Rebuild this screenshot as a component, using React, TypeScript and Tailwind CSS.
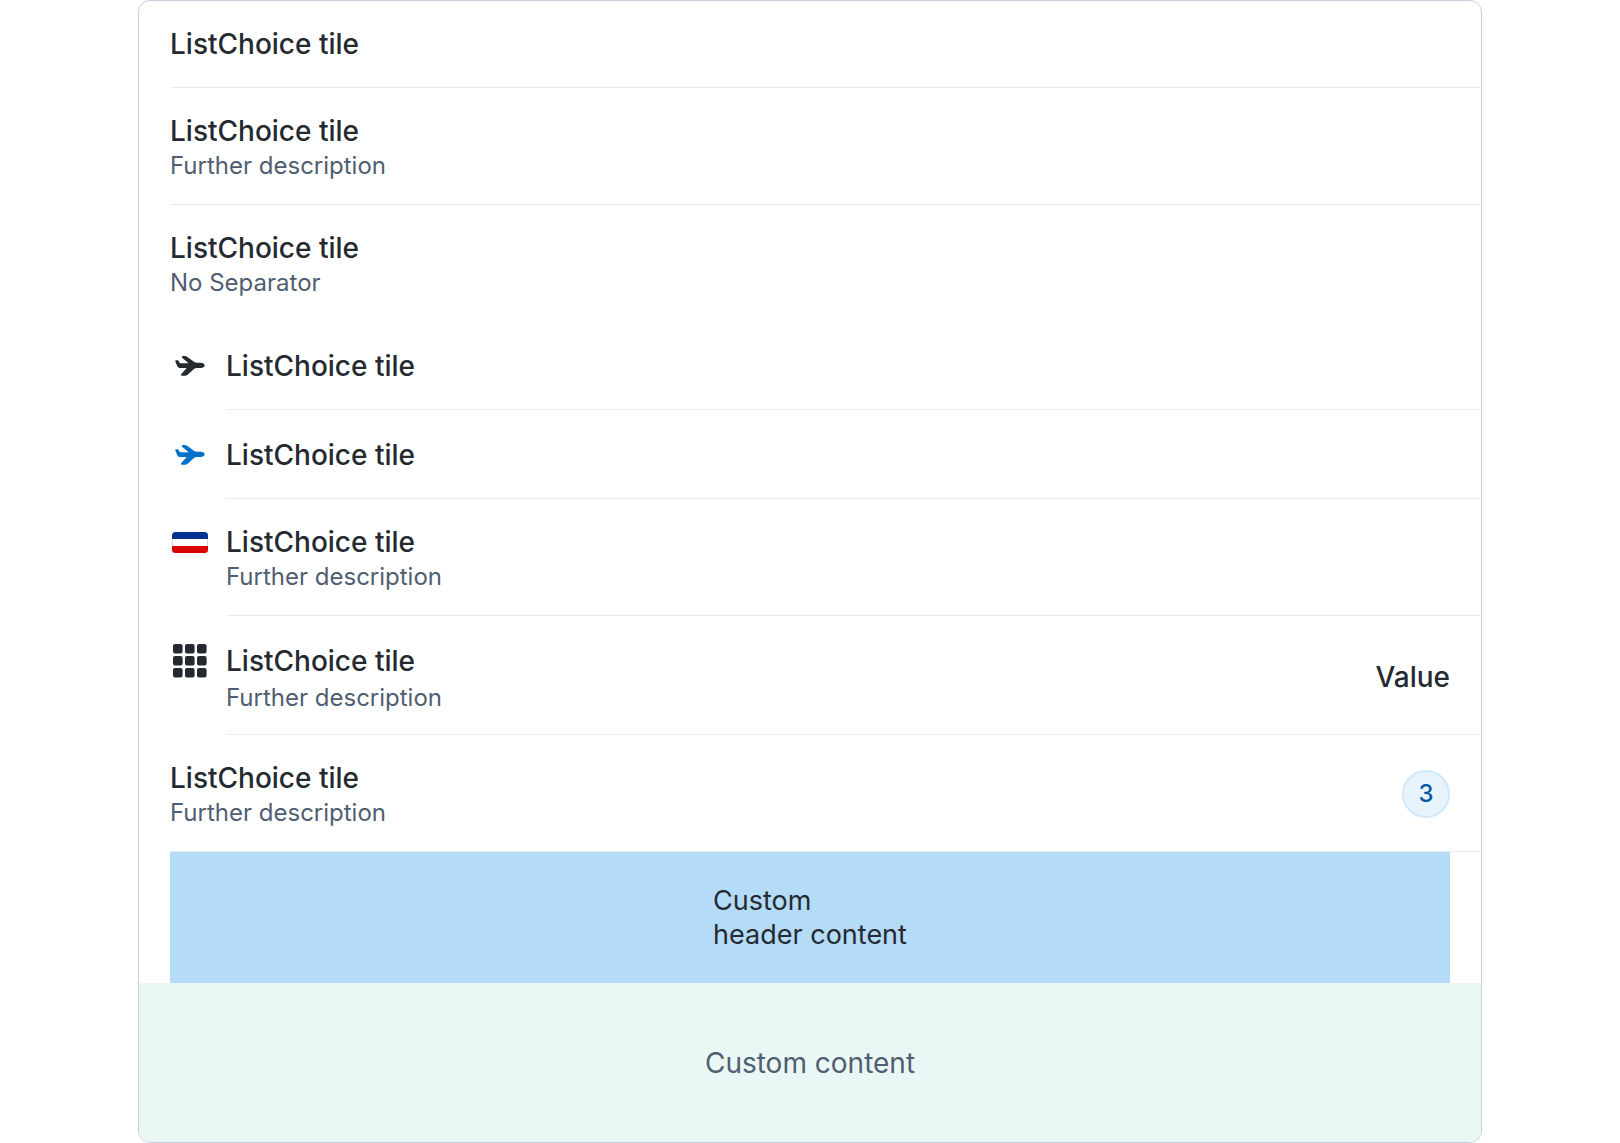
import type { ReactNode } from "react";

function Airplane() {
  return (
    <svg viewBox="0 0 90 60" className="h-5 w-[30px]" fill="currentColor" aria-hidden="true">
      <path d="M3 13H8Q10 13 11 15L14 20Q15 22 18 22H41L22 6Q18 1 23 0H30Q33 0 36 2L57 17Q61 20 66 20H79Q89 22 89 28Q89 34 79 36H66Q60 36 56 40L38 56Q34 59 30 59H20Q15 58 19 54L35 36H14Q9 36 7 31L1 17Q0 13 3 13Z" />
    </svg>
  );
}

function Flag() {
  return (
    <svg viewBox="0 0 36 21" className="h-[21px] w-9" aria-hidden="true">
      <clipPath id="flag-shape">
        <rect width="36" height="21" rx="3.5" />
      </clipPath>
      <g clipPath="url(#flag-shape)">
        <rect width="36" height="21" fill="#d3d9e0" />
        <rect x="1" width="34" height="21" fill="#fff" />
        <rect width="36" height="7" fill="#003391" />
        <rect y="14" width="36" height="7" fill="#dd0000" />
      </g>
    </svg>
  );
}

function Grid() {
  const steps = [0, 12, 24];
  return (
    <svg viewBox="0 0 34 34" className="size-[34px]" fill="currentColor" aria-hidden="true">
      {steps.map((y) =>
        steps.map((x) => <rect key={`${x}-${y}`} x={x} y={y} width="9.6" height="9.6" rx="2" />),
      )}
    </svg>
  );
}

type TileProps = {
  description?: string;
  icon?: ReactNode;
  action?: ReactNode;
  separator?: boolean;
  tall?: boolean;
};

function Tile({ description, icon, action, separator = true, tall = false }: TileProps) {
  const line = tall ? "h-[38px] leading-[38px]" : "h-[34px] leading-[34px]";
  const bottom = tall ? (description ? "pb-[22px]" : "pb-6") : description ? "pb-6" : "pb-[26px]";
  return (
    <li>
      <button type="button" className="flex w-full pl-[31px] text-left">
        {icon && (
          <span className={`mt-[26px] mr-4 flex w-10 shrink-0 items-center justify-center ${line}`}>{icon}</span>
        )}
        <span
          className={`flex grow items-center justify-between pt-[26px] pr-[31px] ${bottom} ${
            separator ? "border-b border-[#e8edf1]" : ""
          }`}
        >
          <span className="flex flex-col">
            <span className={`text-[28px] font-medium ${line}`}>ListChoice tile</span>
            {description && (
              <span className="pt-1 text-2xl leading-7 text-[#4f5e71]">{description}</span>
            )}
          </span>
          {action}
        </span>
      </button>
    </li>
  );
}

export default function App() {
  return (
    <main className="px-4 font-['Inter',sans-serif] text-[#252a31] [font-optical-sizing:none]">
      <div className="mx-auto max-w-[1344px] overflow-hidden rounded-xl border border-[#c5d0dd] bg-white">
        <ul>
          <Tile />
          <Tile description="Further description" />
          <Tile description="No Separator" separator={false} />
          <Tile tall icon={<Airplane />} />
          <Tile tall icon={<span className="text-[#0172cb]"><Airplane /></span>} />
          <Tile icon={<Flag />} description="Further description" />
          <Tile
            tall
            icon={<Grid />}
            description="Further description"
            action={<span className="text-[28px] leading-[34px] font-medium">Value</span>}
          />
          <Tile
            description="Further description"
            action={
              <span className="flex size-12 items-center justify-center rounded-full border-2 border-[#d0e8fb] bg-[#e8f4fd] text-2xl font-medium text-[#005aa3]">
                3
              </span>
            }
          />
        </ul>
        <div className="mx-[31px] flex justify-center bg-[#b4dbf8] pt-8 pb-[31px] text-[27px] leading-[34px]">
          <p>
            Custom
            <br />
            header content
          </p>
        </div>
        <p className="bg-[#ebf7f5] pt-[63px] pb-[62px] text-center text-[28px] leading-[34px] text-[#4f5e71]">
          Custom content
        </p>
      </div>
    </main>
  );
}
